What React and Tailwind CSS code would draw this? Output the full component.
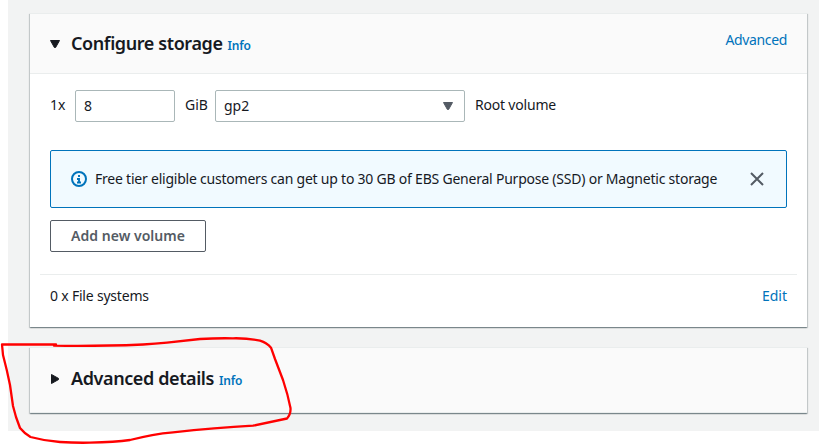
const cardClass =
  'w-[777px] bg-white shadow-[0_1px_1px_0_rgba(0,28,36,0.3),1px_1px_1px_0_rgba(0,28,36,0.15),-1px_1px_1px_0_rgba(0,28,36,0.15)]';

function Caret({ className, d }) {
  return (
    <svg viewBox="0 0 10 10" className={`h-2.5 w-2.5 shrink-0 ${className}`} fill="currentColor" stroke="currentColor" strokeWidth="1" strokeLinejoin="round">
      <path d={d} />
    </svg>
  );
}

const DOWN = 'M.5 1.5h9L5.6 8.5H4.4z';
const RIGHT = 'M1.5 .5v9L8.5 5.6V4.4z';

function InfoIcon() {
  return (
    <svg viewBox="0 0 16 16" className="h-4 w-4 shrink-0" fill="none" stroke="#0073bb" strokeWidth="2">
      <circle cx="8" cy="8" r="7" />
      <path d="M8 12V8H6M6 11.5h4M8 6V4" strokeWidth="1.9" />
    </svg>
  );
}

function SectionTitle({ caret, title }) {
  return (
    <div className="flex h-[59px] items-center">
      <Caret className="text-[#16191f]" d={caret} />
      <h2 className="-mt-px ml-[11px] whitespace-nowrap text-[18px] font-semibold leading-[22px] tracking-[-0.4px]">{title}</h2>
      <a className="ml-[5px] mt-[4px] text-[12px] font-semibold leading-4 tracking-[-0.2px] text-[#0073bb]">Info</a>
    </div>
  );
}

function ConfigureStorage() {
  return (
    <section className={`${cardClass} h-[314px]`}>
      <header className="flex h-[61px] justify-between border-y border-[#eaeded] bg-[#fafafa] px-5">
        <SectionTitle caret={DOWN} title="Configure storage" />
        <a className="mt-[15px] text-[14px] leading-[22px] tracking-[-0.35px] text-[#0073bb]">Advanced</a>
      </header>
      <div className="mt-4 flex h-8 pl-5 leading-[30px]">
        <span className="w-[25px]">1x</span>
        <div className="h-8 w-[100px] rounded-[2px] border border-[#aab7b8] pl-2">8</div>
        <span className="w-10 pl-2.5">GiB</span>
        <div className="flex h-8 w-[250px] items-center justify-between rounded-[2px] border border-[#aab7b8] pl-2 pr-[11px]">
          <span>gp2</span>
          <Caret className="text-[#545b64]" d={DOWN} />
        </div>
        <span className="pl-2.5 tracking-[-0.2px]">Root volume</span>
      </div>
      <div className="mx-5 mt-7 flex h-[58px] items-center rounded-[2px] border border-[#0073bb] bg-[#f1faff] pl-5 pr-[22px]">
        <InfoIcon />
        <p className="ml-2 whitespace-nowrap tracking-[-0.222px]">Free tier eligible customers can get up to 30 GB of EBS General Purpose (SSD) or Magnetic storage</p>
        <svg viewBox="0 0 14 14" className="ml-auto h-3.5 w-3.5 shrink-0" fill="none" stroke="#545b64" strokeWidth="2">
          <path d="M1 1l12 12M13 1L1 13" />
        </svg>
      </div>
      <button className="ml-5 mt-3 block h-8 w-[156px] whitespace-nowrap rounded-[2px] border border-[#545b64] text-center font-semibold leading-[30px] tracking-[0.03px] text-[#545b64]">
        Add new volume
      </button>
      <div className="mx-2.5 mt-[22px] flex h-[43px] items-center justify-between border-t border-[#eaeded] px-2.5">
        <span className="tracking-[-0.2px]">0 x File systems</span>
        <a className="text-[#0073bb]">Edit</a>
      </div>
    </section>
  );
}

function AdvancedDetails() {
  return (
    <section className={`${cardClass} mt-5 h-[66px]`}>
      <header className="h-[66px] border-y border-[#eaeded] bg-[#fafafa] pl-5 pt-px">
        <SectionTitle caret={RIGHT} title="Advanced details" />
      </header>
    </section>
  );
}

export default function App() {
  return (
    <div className="relative h-[444px] w-[819px] overflow-hidden bg-white font-['Noto_Sans','Open_Sans',sans-serif] text-[14px] leading-[22px] text-[#16191f]">
      <main className="ml-2 h-[431px] bg-[#f2f3f3] pl-[22px] pt-[13px]">
        <ConfigureStorage />
        <AdvancedDetails />
      </main>
      <svg viewBox="0 0 819 444" className="pointer-events-none absolute inset-0 h-full w-full" fill="none" stroke="#ff0000" strokeWidth="2.3" strokeLinecap="round" strokeLinejoin="round">
        <path d="M56 344.5H2L3 355Q7 370 10 385L13 406 16 417 20 428Q24 433 30.5 437Q45 441 60 442Q75 443 90 442.7Q115 442 130 440Q153 434 173 432.3Q215 428 253 425.7L287 418.5Q291 414 290.5 408Q288 395 283 380L275 359 271 347.7Q267 343 260 340.7Q248 338 233 338.3Q216 338 200 339L167 342.7Q155 344 143 344.5Q95 346.5 54 345.7" />
      </svg>
    </div>
  );
}
